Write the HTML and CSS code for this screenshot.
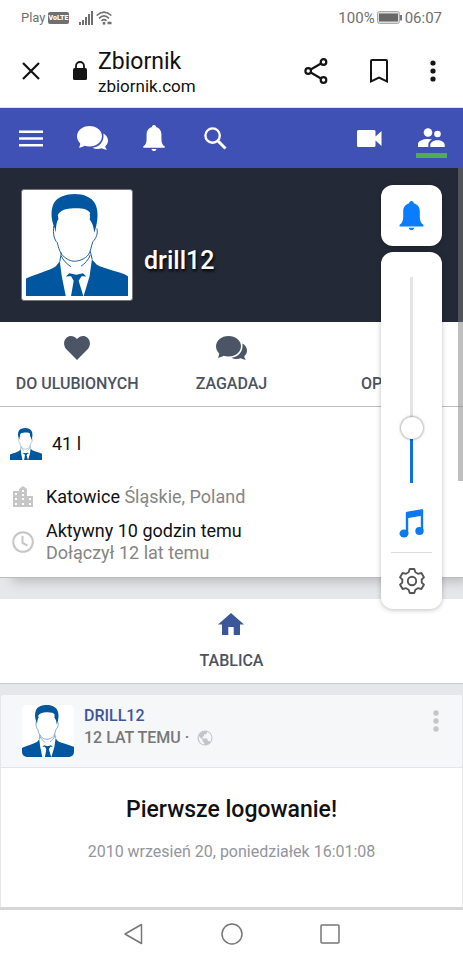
FILE: index.html
```html
<!DOCTYPE html>
<html lang="pl">
<head>
<meta charset="utf-8">
<meta name="viewport" content="width=device-width, initial-scale=1">
<title>Zbiornik</title>
<link rel="stylesheet" href="styles.css">
</head>
<body>
<svg class="sprite" aria-hidden="true">
  <symbol id="avatar" viewBox="48 42 308 308">
    <rect x="48" y="42" width="308" height="308" fill="#fff"/>
    <g fill="#00579f">
      <path d="M134 144C123 118 122 90 132 70C143 50 170 42 195 42C222 42 246 52 256 70C268 92 265 122 258 147L254 158C252 142 250 132 244 124L240 118C244 110 238 104 242 100C236 87 216 84 192 85C168 86 150 92 144 106L146 118C140 126 140 134 137 158Z"/>
      <path d="M48 350V297C80 282 118 274 138 260L150 245L156 290L168 350Z"/>
      <path d="M356 350V290C330 276 282 268 262 256L247 240L240 290L222 350Z"/>
      <path d="M168 291L179 281L200 286L220 281L230 291L222 290L216 290L207 304L221 350H184L192 304L184 290L176 290Z"/>
    </g>
    <path d="M132 138C128 160 134 182 142 188C146 204 152 222 158 227C172 240 182 245 195 245C208 245 226 238 236 226C244 216 244 200 250 186C260 176 266 160 262 146M155 219L150 246M154 228C160 242 170 252 184 262M242 215L248 240M242 226C236 242 226 252 214 260" fill="none" stroke="#1d5f9c" stroke-width="3"/>
  </symbol>
  <symbol id="chat" viewBox="0 0 31 24">
    <path d="M12.500 0C19.500 0 25 4.500 25 10.300S19.500 20.500 12.500 20.500C10.800 20.500 9 20.200 7.600 19.700C6 20.800 4 21.500 1.800 21.500C3 20.200 3.300 18.600 3.100 17.300C1.200 15.500 0 13 0 10.300C0 4.500 5.500 0 12.500 0Z"/>
    <path d="M26.400 7.500C29.200 9 31 11.500 31 14.600C31 17 29.900 18.800 28.300 20.200C28.300 21.400 28.900 22.500 30 23.700C28 23.700 26.300 23.200 24.800 22.300C21.600 23.600 18 23.200 15.400 21.700C22 21 27.600 16 26.400 7.500Z"/>
  </symbol>
  <symbol id="bell" viewBox="0 0 24 28">
    <path d="M12 0C13.300 0 14.200 .9 14.200 2.200C18 3.200 20 6.200 20 10V15C20 19 21 21.500 23.500 23V24.500H.5V23C3 21.500 4 19 4 15V10C4 6.200 6 3.200 9.800 2.200C9.800 .9 10.700 0 12 0Z"/>
    <path d="M9.300 25.800H14.700C14.500 27.200 13.400 28 12 28S9.500 27.200 9.300 25.800Z"/>
  </symbol>
</svg>

<div class="screen">
  <header class="status">
    <div class="status-side">
      <span class="carrier">Play</span>
      <span class="volte">VoLTE</span>
      <svg class="signal" width="15" height="14" viewBox="0 0 15 14" fill="#707070"><path d="M0 11H2V14H0ZM3 9H5V14H3ZM6 6H8V14H6ZM9 3H11V14H9ZM12 0H14V14H12Z"/></svg>
      <svg width="17" height="14" viewBox="0 0 17 14" fill="none" stroke="#707070" stroke-width="1.600"><path d="M.6 4.500Q8 -2.300 15.400 4.500M3 7.300Q8 2.600 13 7.300M5.500 9.800Q8 7.500 10.500 9.800"/><circle cx="8" cy="12.300" r=".7"/><path d="M11.500 12H15.500" stroke-width="2.500"/></svg>
    </div>
    <div class="status-side">
      <span>100%</span>
      <svg width="26" height="14" viewBox="0 0 26 14"><rect x=".5" y=".5" width="22" height="12" rx="2" fill="#ddd" stroke="#aaa"/><rect x="2" y="2.500" width="19" height="8" fill="#686868"/><path d="M24 4V9.500" stroke="#777" stroke-width="2"/></svg>
      <span>06:07</span>
    </div>
  </header>

  <div class="browser">
    <button class="plain" aria-label="Zamknij"><svg width="20" height="20" viewBox="0 0 20 20" stroke="#111" stroke-width="2.200"><path d="M2 2L18 18M18 2L2 18"/></svg></button>
    <svg class="lock" width="14" height="19" viewBox="0 0 14 19"><rect y="7" width="14" height="12" rx="1.500" fill="#151515"/><path d="M3 8V5A4 4 0 0 1 11 5V8" fill="none" stroke="#151515" stroke-width="1.800"/></svg>
    <div class="address">
      <span class="page-title">Zbiornik</span>
      <span class="domain">zbiornik.com</span>
    </div>
    <div class="browser-tools">
      <button class="plain" aria-label="Udostępnij"><svg width="24" height="26" viewBox="0 0 24 26" fill="none" stroke="#151515" stroke-width="2.200"><path d="M6.700 11.500L17 5.500M6.700 14.500L17 20.500"/><circle cx="4.200" cy="13" r="2.800"/><circle cx="19.500" cy="4" r="2.800"/><circle cx="19.500" cy="22" r="2.800"/></svg></button>
      <button class="plain" aria-label="Zakładka"><svg width="18" height="24" viewBox="0 0 18 24" fill="none" stroke="#151515" stroke-width="2"><path d="M1 22.300V2Q1 1 2 1H16Q17 1 17 2V22.300L9 18.500Z"/></svg></button>
      <button class="plain" aria-label="Menu przeglądarki"><svg width="6" height="22" viewBox="0 0 6 22" fill="#151515"><circle cx="3" cy="3" r="2.600"/><circle cx="3" cy="11" r="2.600"/><circle cx="3" cy="19" r="2.600"/></svg></button>
    </div>
  </div>

  <nav class="site-nav">
    <button class="plain" aria-label="Menu"><svg width="24" height="17" viewBox="0 0 24 17" stroke="#fff" stroke-width="2.400"><path d="M0 1.700H24M0 8.500H24M0 15.300H24"/></svg></button>
    <button class="plain" aria-label="Wiadomości"><svg width="31" height="24"><use href="#chat"/></svg></button>
    <button class="plain" aria-label="Powiadomienia"><svg width="24" height="26"><use href="#bell"/></svg></button>
    <button class="plain search" aria-label="Szukaj"><svg width="23" height="23" viewBox="0 0 23 23" stroke="#fff"><circle cx="8.600" cy="8.600" r="7.200" stroke-width="2.400"/><path d="M14 14L21.500 21.500" stroke-width="3"/></svg></button>
    <button class="plain video" aria-label="Wideo"><svg width="25" height="17" viewBox="0 0 25 17"><path d="M1.500 0H17Q18.500 0 18.500 1.500V6.500L24.500 1V16L18.500 10.500V15.500Q18.500 17 17 17H1.500Q0 17 0 15.500V1.500Q0 0 1.500 0Z"/></svg></button>
    <button class="plain people" aria-label="Znajomi"><svg width="27" height="19" viewBox="0 0 27 19"><circle cx="10" cy="4.500" r="4.300"/><circle cx="19.500" cy="6" r="3.300"/><path d="M0 19V16C0 13 5 11 10 11C11.600 11 13 11.200 14 11.600C11.500 13 10.300 14.800 10.300 16.500V19Z"/><path d="M12.300 19V17C12.300 14 16 12.300 19.500 12.300S26.700 14 26.700 17V19Z"/></svg></button>
  </nav>

  <main>
    <section class="cover">
      <svg class="portrait" role="img" aria-label="Zdjęcie profilowe"><use href="#avatar"/></svg>
      <h1>drill12</h1>
    </section>

    <div class="actions">
      <button class="tab"><svg width="26" height="24" viewBox="0 0 26 24"><path d="M13 24L2.600 13.500C-1 9.700-.5 4.500 2.500 1.800C5.500-.9 10-.4 13 3C16-.4 20.500-.9 23.500 1.800C26.500 4.500 27 9.700 23.400 13.500Z"/></svg>DO ULUBIONYCH</button>
      <button class="tab"><svg width="31" height="24"><use href="#chat"/></svg>ZAGADAJ</button>
      <button class="tab"><svg width="26" height="24" viewBox="0 0 26 24"><circle cx="13" cy="12" r="3"/></svg>OPCJE</button>
    </div>

    <section class="info">
      <div class="info-row age"><svg width="32" height="32"><use href="#avatar"/></svg><span>41 l</span></div>
      <div class="info-row"><svg width="22" height="22" viewBox="0 0 22 22" fill="#c6c6c6"><path fill-rule="evenodd" d="M1 5H7V3L11 0L15 3V10H21V21H1ZM3 7V9H5V7ZM3 12V14H5V12ZM3 17V19H5V17ZM10 4V6H12V4ZM10 8V10H12V8ZM10 12V14H12V12ZM10 17V19H12V17ZM17 12V14H19V12ZM17 17V19H19V17Z"/></svg><span>Katowice <span class="muted">Śląskie, Poland</span></span></div>
      <div class="info-row activity"><svg width="22" height="22" viewBox="0 0 22 22" fill="none" stroke="#c6c6c6" stroke-width="2"><circle cx="11" cy="11" r="9.800"/><path d="M10.500 5V12L15.500 14.500"/></svg><span>Aktywny 10 godzin temu<br><span class="muted">Dołączył 12 lat temu</span></span></div>
    </section>

    <div class="board">
      <button class="tab"><svg class="home" width="26" height="24" viewBox="0 0 26 24"><path d="M13 0L26 11.500H22V22H15.700V14H10.300V22H4V11.500H0Z"/></svg>TABLICA</button>
    </div>

    <article class="post">
      <header class="post-head">
        <svg class="thumb"><use href="#avatar"/></svg>
        <div class="byline">
          <a href="#drill12">DRILL12</a>
          <span class="when">12 LAT TEMU ·<svg width="16" height="16" viewBox="0 0 16 16"><circle cx="8" cy="8" r="7.500" fill="#c3c5c8"/><path d="M1.700 6L5.700 10V11.500L7.200 13V14.500C3.500 14 1.500 11 1.700 6ZM10 1.800V3L8.500 4.500H7V6L5.500 7V8.500H10L11 11H12.500L13.300 12C15.600 8.500 14.500 3.500 10 1.800Z" fill="#f5f7f9"/></svg></span>
        </div>
        <button class="plain more" aria-label="Więcej"><svg width="6" height="22" viewBox="0 0 6 22" fill="#c5c6c8"><circle cx="3" cy="3" r="2.700"/><circle cx="3" cy="11" r="2.700"/><circle cx="3" cy="19" r="2.700"/></svg></button>
      </header>
      <div class="post-body">
        <h2>Pierwsze logowanie!</h2>
        <time datetime="2010-09-20T16:01:08">2010 wrzesień 20, poniedziałek 16:01:08</time>
      </div>
    </article>
  </main>

  <footer class="system-nav">
    <button class="plain" aria-label="Wstecz"><svg width="22" height="22" viewBox="0 0 22 22"><path d="M18.500 1.500V20.500L2 11Z"/></svg></button>
    <button class="plain" aria-label="Ekran główny"><svg width="22" height="22" viewBox="0 0 22 22"><circle cx="11" cy="11" r="10"/></svg></button>
    <button class="plain" aria-label="Ostatnie"><svg width="22" height="22" viewBox="0 0 22 22"><rect x="2" y="2" width="18" height="18" rx="1"/></svg></button>
  </footer>

  <div class="scrollbar"></div>
  <aside class="volume">
    <button class="ringer" aria-label="Dzwonek"><svg width="25" height="29"><use href="#bell"/></svg></button>
    <div class="panel">
      <input type="range" min="0" max="100" value="24" aria-label="Głośność">
      <svg class="note" width="26" height="30" viewBox="0 0 26 30"><path d="M8 24V4L23 1.500V21.500" fill="none" stroke="#0b7af0" stroke-width="2.400" stroke-linejoin="round"/><path d="M7 3.500L24 .5V6.500L7 9.500Z" fill="#0b7af0"/><ellipse cx="5" cy="24.500" rx="4.500" ry="4" fill="#0b7af0"/><ellipse cx="20.500" cy="22" rx="4.200" ry="3.900" fill="#0b7af0"/></svg>
      <button class="settings" aria-label="Ustawienia"><svg width="26" height="26" viewBox="0 0 26 26" fill="none" stroke="#555" stroke-width="1.900" stroke-linejoin="round"><path d="M10.700 1H15.300L16.400 4.300L19 5.800L22.400 5L24.900 9.300L22.700 11.500V14.500L24.900 16.700L22.400 21L19 20.200L16.400 21.700L15.300 25H10.700L9.600 21.700L7 20.200L3.600 21L1.100 16.700L3.300 14.500V11.500L1.100 9.300L3.600 5L7 5.800L9.600 4.300Z"/><circle cx="13" cy="13" r="4.200"/></svg></button>
    </div>
  </aside>
</div>
</body>
</html>
```

FILE: styles.css
```css
* {
  box-sizing: border-box;
}

body {
  margin: 0;
  background: #fff;
  color: #111;
  font-family: Roboto, sans-serif;
}

button {
  font: inherit;
  color: inherit;
  border: 0;
  padding: 0;
  background: none;
}

svg {
  display: block;
  flex: none;
}

.sprite {
  position: absolute;
  width: 0;
  height: 0;
}

.plain {
  display: flex;
}

.screen {
  position: relative;
  display: flex;
  flex-direction: column;
  min-height: 100vh;
}

/* Phone status bar */
.status {
  display: flex;
  justify-content: space-between;
  height: 35px;
  padding: 0 21px;
  color: #707070;
  font-size: 15px;
}

.status-side {
  display: flex;
  align-items: center;
  gap: 2px;
}

.carrier {
  font-size: 13px;
}

.volte {
  padding: 0 1px;
  border-radius: 2px;
  background: #707070;
  color: #fff;
  font-size: 7px;
  font-weight: 900;
  line-height: 12px;
}

.signal {
  margin-left: 8px;
}

/* Browser bar */
.browser {
  display: flex;
  align-items: center;
  height: 73px;
  padding: 2px 27px 3px 21px;
  border-bottom: 1px solid #dfe1f0;
}

.lock {
  margin: 0 11px 0 32px;
}

.address {
  display: flex;
  flex: 1;
  flex-direction: column;
  padding-top: 4px;
}

.page-title {
  font-size: 23px;
  line-height: 26px;
}

.domain {
  font-size: 17px;
  line-height: 22px;
}

.browser-tools {
  display: flex;
  align-items: center;
  gap: 42px;
}

/* Site navigation */
.site-nav {
  display: flex;
  align-items: center;
  gap: 34px;
  height: 60px;
  padding: 0 16px 0 19px;
  background: #3f51b5;
}

.site-nav svg {
  fill: #fff;
}

.site-nav .search svg {
  fill: none;
}

.search {
  padding-left: 4px;
}

.video {
  margin-left: auto;
}

.people {
  justify-content: center;
  width: 31px;
  padding: 10px 0 6px;
  border-bottom: 5px solid #4caf50;
}

main {
  display: flex;
  flex: 1;
  flex-direction: column;
  background: #e6e7ea;
}

.cover {
  display: flex;
  align-items: center;
  gap: 11px;
  height: 154px;
  padding: 0 21px;
  background: #232936;
}

.portrait {
  width: 112px;
  height: 112px;
  padding: 4px;
  border: 1px solid #777;
  border-radius: 3px;
  background: #fff;
}

h1 {
  margin: 32px 0 0;
  color: #fff;
  font-size: 25px;
  font-weight: 500;
  line-height: 30px;
  text-shadow: 1px 2px 3px #000;
}

.actions {
  display: grid;
  grid-template-columns: repeat(3, 1fr);
  border-bottom: 1px solid #bdbdbd;
  background: #fff;
}

.tab {
  display: flex;
  flex-direction: column;
  align-items: center;
  gap: 14px;
  padding: 14px 0 12px;
  color: #4b5363;
  font-size: 16px;
  font-weight: 500;
  line-height: 20px;
}

.tab svg {
  fill: #4b5566;
}

.tab .home {
  fill: #3b5699;
}

.info {
  display: flex;
  flex-direction: column;
  gap: 12px;
  padding: 21px 12px 13px;
  border-bottom: 1px solid #bbb;
  background: #fff;
  box-shadow: 8px 8px 10px -4px #bcbdc2;
  font-size: 18px;
  line-height: 22px;
}

.info-row {
  display: flex;
  align-items: center;
  gap: 12px;
}

.age {
  gap: 10px;
  margin: 0 -2px 14px;
}

.muted {
  color: #858585;
}

.board {
  display: flex;
  justify-content: center;
  margin-top: 21px;
  border-bottom: 1px solid #c8c9cc;
  background: #fff;
}

.post {
  flex: 1;
  margin: 11px 1px 0;
  border-radius: 3px 3px 0 0;
  background: #fff;
}

.post-head {
  display: flex;
  align-items: flex-start;
  gap: 10px;
  height: 73px;
  padding: 10px 23px 0 21px;
  border-bottom: 1px solid #e2e4e7;
  border-radius: 3px 3px 0 0;
  background: #f5f7f9;
}

.thumb {
  width: 52px;
  height: 52px;
  border-radius: 5px;
}

.byline {
  display: flex;
  flex: 1;
  flex-direction: column;
  align-items: flex-start;
  color: #777;
  font-size: 16px;
  font-weight: 500;
  line-height: 22px;
}

.byline a {
  color: #3b5699;
  text-decoration: none;
}

.when {
  display: flex;
  align-items: center;
  gap: 8px;
}

.more {
  margin-top: 5px;
}

.post-body {
  padding: 26px 16px;
  text-align: center;
}

h2 {
  margin: 0 0 16px;
  font-size: 23px;
  font-weight: 500;
  line-height: 32px;
}

time {
  display: block;
  color: #92959d;
  font-size: 16px;
  line-height: 20px;
}

/* Phone navigation */
.system-nav {
  display: flex;
  align-items: center;
  justify-content: center;
  gap: 76px;
  height: 53px;
  padding-bottom: 2px;
  border-top: 3px solid #d6d6d6;
  background: #fff;
}

.system-nav svg {
  fill: none;
  stroke: #777;
  stroke-width: 1.5px;
  stroke-linejoin: round;
}

.scrollbar {
  position: absolute;
  top: 168px;
  right: 0;
  width: 5px;
  height: 313px;
  background: rgba(128, 128, 128, 0.5);
}

/* Volume overlay */
.volume {
  position: absolute;
  top: 185px;
  right: 21px;
  display: flex;
  flex-direction: column;
  gap: 6px;
  width: 61px;
}

.ringer,
.panel {
  display: flex;
  flex-direction: column;
  align-items: center;
  border-radius: 12px;
  background: #fff;
  box-shadow: 0 1px 5px rgba(0, 0, 0, 0.25);
}

.ringer {
  justify-content: center;
  height: 61px;
  fill: #0a7cff;
}

.panel {
  padding: 25px 10px 15px;
}

input[type="range"] {
  width: 22px;
  height: 206px;
  margin: 0;
  appearance: none;
  background: linear-gradient(#e4e4e4 75%, #0b72e0 75%) center / 3px 100% no-repeat;
  direction: rtl;
  writing-mode: vertical-lr;
}

input[type="range"]::-webkit-slider-thumb {
  width: 22px;
  height: 22px;
  appearance: none;
  border-radius: 50%;
  background: #fff;
  box-shadow: 0 0 3px rgba(0, 0, 0, 0.6);
}

.note {
  margin: 26px 0 13px;
}

.settings {
  display: flex;
  justify-content: center;
  align-self: stretch;
  padding-top: 15px;
  border-top: 1px solid #ddd;
}
```
